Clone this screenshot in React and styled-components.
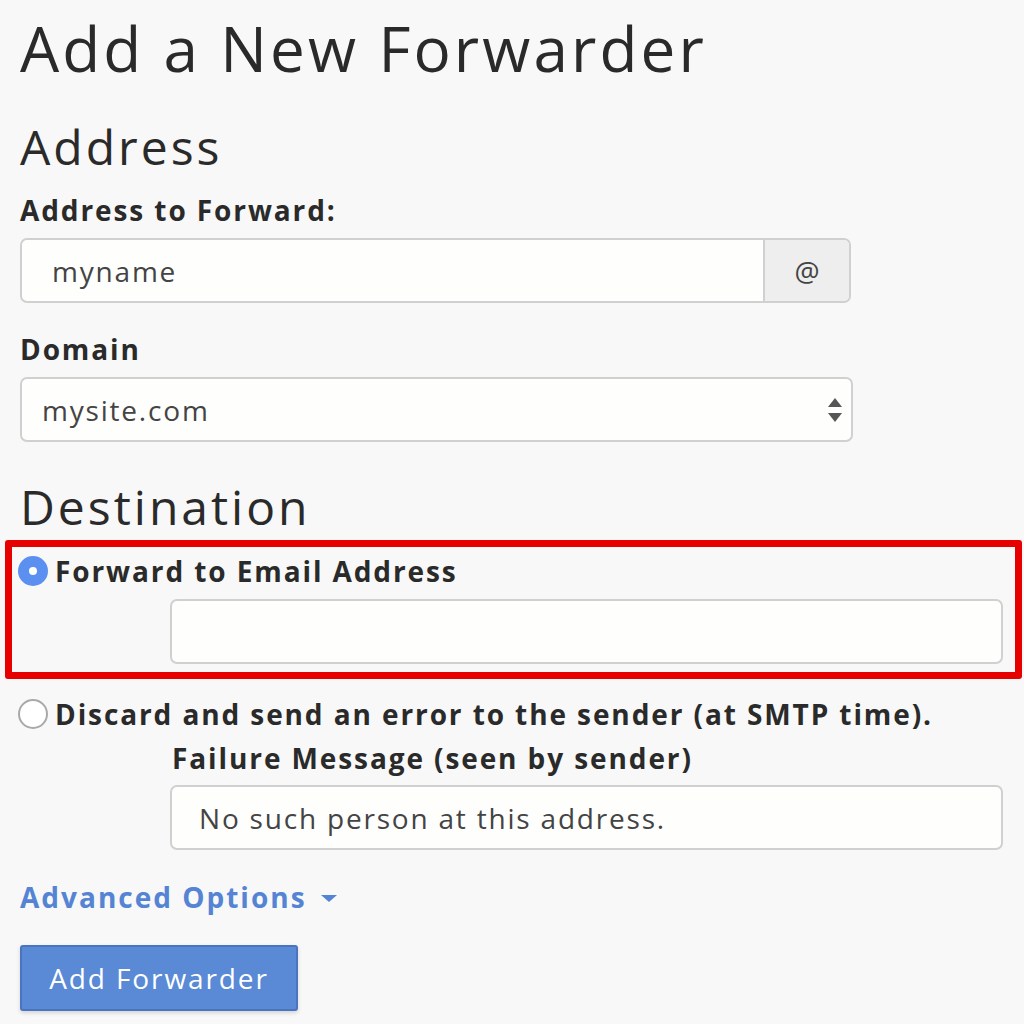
import React from "react";
import styled, { createGlobalStyle } from "styled-components";

const GlobalStyle = createGlobalStyle`
  html, body {
    margin: 0;
    padding: 0;
    background: #f7f8f7;
  }
  body {
    font-family: "Open Sans", "Liberation Sans", sans-serif;
    color: #333;
  }
`;

const Page = styled.div`
  width: 1024px;
  height: 1024px;
  overflow: hidden;
  padding: 15px 0 0 20px;
  box-sizing: border-box;
  background: #f7f8f7;
`;

const Title = styled.h1`
  margin: 0;
  font-size: 62px;
  font-weight: 400;
  line-height: 66px;
  letter-spacing: 3.1px;
  color: #2a2a2a;
`;

const Heading = styled.h2`
  margin: ${(p) => p.top || 39}px 0 0;
  font-size: 48px;
  font-weight: 400;
  line-height: 53px;
  letter-spacing: 3px;
  color: #2a2a2a;
`;

const Label = styled.label`
  display: block;
  margin: ${(p) => p.top || 0}px 0 0 ${(p) => p.indent || 0}px;
  font-size: 28px;
  font-weight: 700;
  line-height: 36px;
  letter-spacing: 1.9px;
  color: #2a2a2a;
`;

const Field = styled.div`
  display: flex;
  width: ${(p) => p.width}px;
  height: 65px;
  margin: ${(p) => p.top || 10}px 0 0 ${(p) => p.indent || 0}px;
  box-sizing: border-box;
  border: 2px solid #cfd0cf;
  border-radius: 7px;
  background: #fefefd;
  overflow: hidden;
`;

const Input = styled.div`
  flex: 1;
  display: flex;
  align-items: center;
  padding-left: ${(p) => p.pad || 20}px;
  font-size: 28px;
  letter-spacing: 1.8px;
  color: #444;
`;

const Addon = styled.div`
  width: 84px;
  display: flex;
  align-items: center;
  justify-content: center;
  border-left: 2px solid #cfd0cf;
  background: #eeeeee;
  font-size: 28px;
  color: #444;
`;

const SelectArrows = styled.div`
  width: 24px;
  display: flex;
  align-items: center;
  justify-content: flex-start;
`;

const Highlight = styled.div`
  margin: 7px 0 0 -15px;
  width: 1017px;
  box-sizing: border-box;
  border: 7px solid #e60000;
  border-radius: 3px;
  padding: 6px 0 8px 8px;
`;

const RadioRow = styled.div`
  display: flex;
  align-items: center;
  gap: 7px;
  margin: ${(p) => p.top || 0}px 0 0 -2px;
  font-size: 28px;
  font-weight: 700;
  line-height: 36px;
  letter-spacing: 1.9px;
  color: #2a2a2a;
`;

const Radio = styled.span`
  width: 30px;
  height: 30px;
  border-radius: 50%;
  box-sizing: border-box;
  flex: none;
  display: flex;
  align-items: center;
  justify-content: center;
  border: ${(p) => (p.checked ? "none" : "2px solid #a9a9a9")};
  background: ${(p) => (p.checked ? "#5b8ff0" : "#ffffff")};
  &::after {
    content: "";
    display: ${(p) => (p.checked ? "block" : "none")};
    width: 8px;
    height: 8px;
    border-radius: 50%;
    background: #fff;
  }
`;

const Link = styled.div`
  display: flex;
  align-items: center;
  gap: 14px;
  margin-top: 28px;
  font-size: 28px;
  font-weight: 700;
  letter-spacing: 2px;
  color: #5584d4;
`;

const Caret = styled.span`
  width: 0;
  height: 0;
  border-left: 8px solid transparent;
  border-right: 8px solid transparent;
  border-top: 7px solid #5584d4;
  margin-top: 3px;
`;

const Button = styled.button`
  margin-top: 29px;
  width: 278px;
  height: 66px;
  border: 2px solid #4a74bf;
  border-radius: 3px;
  background: #5a89d6;
  box-shadow: 0 2px 4px rgba(0, 0, 0, 0.15);
  color: #fff;
  font-family: "Open Sans", "Liberation Sans", sans-serif;
  font-size: 28px;
  font-weight: 400;
  letter-spacing: 1.9px;
`;

function UpDown() {
  return (
    <svg width="16" height="26" viewBox="0 0 16 26">
      <path d="M8 1 L15 10 L1 10 Z" fill="#555" />
      <path d="M8 25 L15 16 L1 16 Z" fill="#555" />
    </svg>
  );
}

export default function App() {
  return (
    <Page>
      <GlobalStyle />
      <Title>Add a New Forwarder</Title>
      <Heading>Address</Heading>
      <Label top={19}>Address to Forward:</Label>
      <Field width={831}>
        <Input pad={30}>myname</Input>
        <Addon>@</Addon>
      </Field>
      <Label top={28}>Domain</Label>
      <Field width={833} top={10}>
        <Input>mysite.com</Input>
        <SelectArrows>
          <UpDown />
        </SelectArrows>
      </Field>
      <Heading top={38}>Destination</Heading>
      <Highlight>
        <RadioRow>
          <Radio checked />
          Forward to Email Address
        </RadioRow>
        <Field width={833} top={10} indent={150} />
      </Highlight>
      <RadioRow top={17}>
        <Radio />
        Discard and send an error to the sender (at SMTP time).
      </RadioRow>
      <Label top={8} indent={152}>
        Failure Message (seen by sender)
      </Label>
      <Field width={833} top={9} indent={150}>
        <Input pad={27}>No such person at this address.</Input>
      </Field>
      <Link>
        Advanced Options
        <Caret />
      </Link>
      <Button>Add Forwarder</Button>
    </Page>
  );
}
